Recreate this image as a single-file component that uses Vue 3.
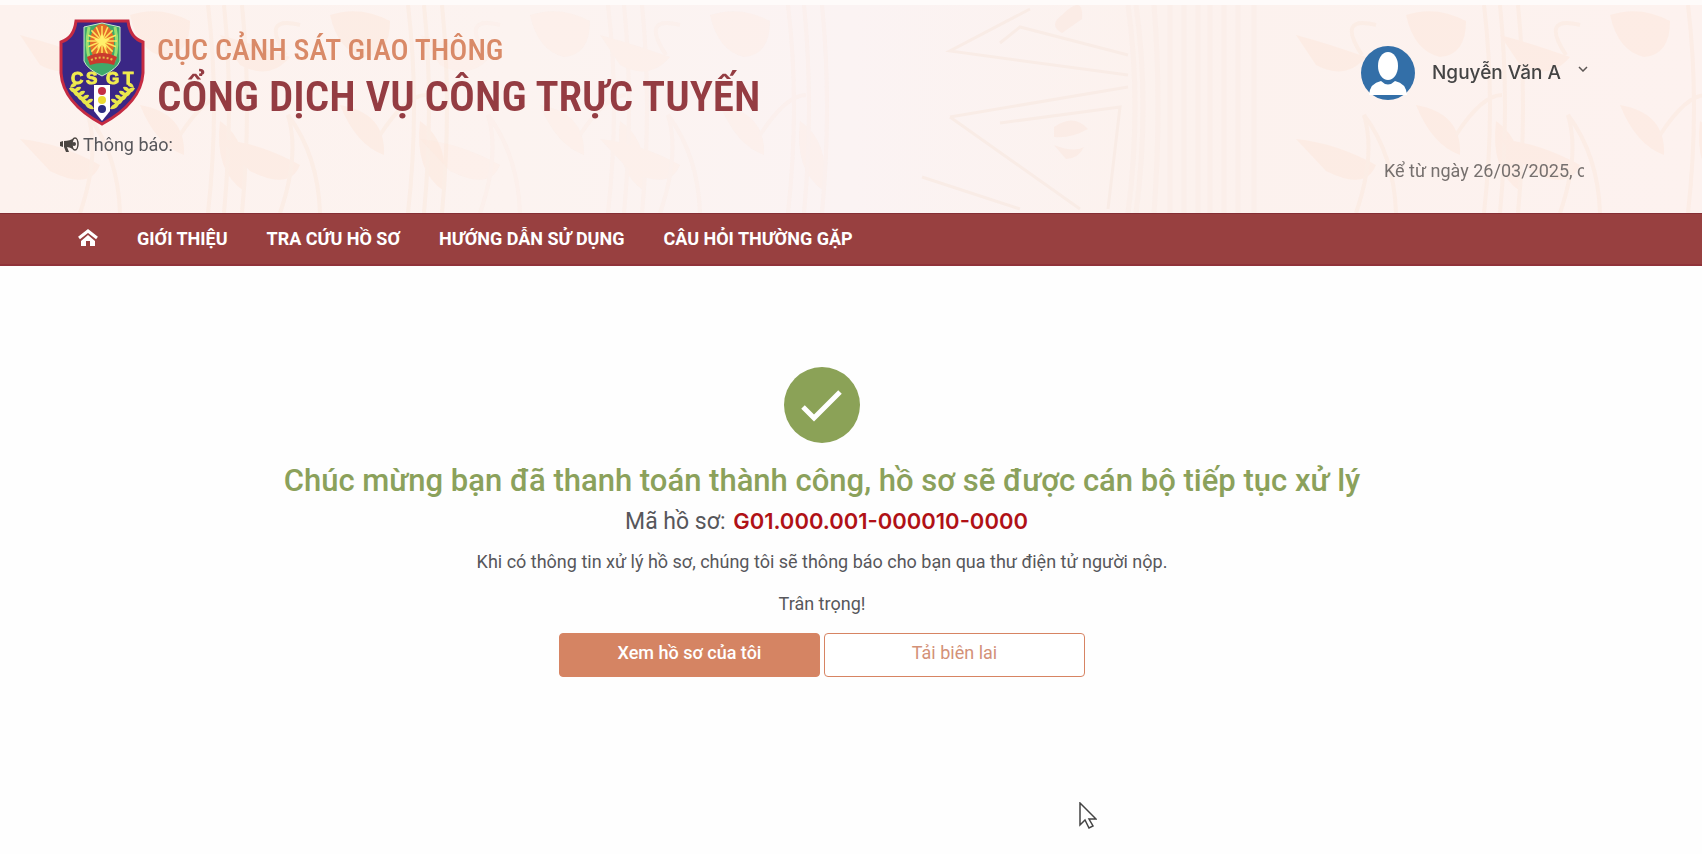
<script setup>
import { ref } from 'vue'

const menu = ['GIỚI THIỆU', 'TRA CỨU HỒ SƠ', 'HƯỚNG DẪN SỬ DỤNG', 'CÂU HỎI THƯỜNG GẶP']
const user = ref('Nguyễn Văn A')
const code = ref('G01.000.001-000010-0000')
const rays = Array.from({ length: 16 }, (_, i) => i * 22.5)
const leaves = [0, 1, 2, 3, 4]
</script>

<template>
  <div class="page">
    <header class="banner">
      <svg class="pattern" viewBox="0 0 1702 208" preserveAspectRatio="xMidYMid slice" aria-hidden="true">
        <defs>
          <linearGradient id="warm">
            <stop offset="0" stop-color="#fdf2ee" /><stop offset="0.3" stop-color="#fcf3f0" />
            <stop offset="0.5" stop-color="#fbf3f3" /><stop offset="0.68" stop-color="#fcf2ee" /><stop offset="1" stop-color="#fdf2ef" />
          </linearGradient>
          <g id="motif" fill="none" stroke="#f9ece6" stroke-width="3">
            <path d="M80 4L0 46 178 70M50 38L70 22 178 50M0 112L178 82M0 112L130 204M50 118L170 102 158 204M-28 172L70 204" />
            <path d="M112 10q22-22 20 4l-20 14q-14-8 0-18zM104 122q20-14 34 2q-18 10-34 8zM104 140q20 8 30 2q-6 12-18 12z" fill="#fbece6" stroke="none" />
            <path d="M178 0Q192 100 178 208M186 0Q200 100 186 208M204 0Q212 100 204 208M220 0V208M234 0V208M248 0V208M260 0V208M274 0V208M288 0V208M304 0V208" stroke="#faeee8" stroke-width="5" opacity="0.8" />
          </g>
          <g id="floral">
            <path d="M0 30q30 8 70 22q-20 24-50 8zM0 134q40 4 80 26q-10 26-50 6zM110 10q30-10 60 6q0 34-26 36q-26-6-34-42zM120 100q46 8 44 50q-28-10-44-50zM200 116q30 20 24 70q-30-20-24-70z" fill="#fde7db" />
            <path d="M60 208Q80 150 68 110Q98 150 100 208M160 130Q186 90 206 90M80 20Q40 10 66 50M188 0Q200 100 188 208M204 0Q214 100 204 208M222 0Q232 100 222 208" fill="none" stroke="#fbe8dd" stroke-width="4" />
          </g>
        </defs>
        <rect width="1702" height="208" fill="url(#warm)" />
        <g opacity="0.5">
          <use href="#floral" x="20" /><use href="#floral" x="220" />
          <use href="#floral" x="1296" /><use href="#floral" x="1500" />
        </g>
        <g opacity="0.25"><use href="#floral" x="420" /><use href="#floral" x="600" /></g>
        <use href="#motif" x="950" />
      </svg>

      <div class="banner-body">
        <div class="brand-side">
          <a class="brand" href="#">
            <svg class="crest" viewBox="0 0 86 108" role="img" aria-label="CSGT">
              <path d="M17 2H69Q71 19 84 23V54Q82 84 43 105Q4 84 2 54V23Q15 19 17 2Z" fill="#3a2785" stroke="#c52b42" stroke-width="3" />
              <path d="M25 8L43 4L61 8V42Q58 50 43 57Q28 50 25 42Z" fill="#3fa96a" stroke="#cdeccb" stroke-width="1" />
              <path d="M30 8Q26 26 31 42M56 8Q60 26 55 42" fill="none" stroke="#9be070" stroke-width="3" />
              <ellipse cx="43" cy="24" rx="12" ry="19" fill="#e46c29" />
              <g stroke="#ffe45c" stroke-width="1.500">
                <line v-for="r in rays" :key="r" x1="43" y1="22" x2="43" y2="7" :transform="`rotate(${r} 43 22)`" />
              </g>
              <path d="M43 14L45 20H51L46 24L48 30L43 26L38 30L40 24L35 20H41Z" fill="#fff06b" />
              <path d="M28 38Q43 30 58 38L55 46Q43 42 31 46Z" fill="#c93a2e" />
              <path d="M32 41Q43 36 54 41" fill="none" stroke="#e7bb4a" stroke-width="2" stroke-dasharray="2 2" />
              <path d="M35 66H51V92L47 97L43 102L39 97L35 92Z" fill="#fff" />
              <circle cx="43" cy="72" r="4" fill="#c42f45" /><circle cx="43" cy="81" r="4" fill="#ecdb32" /><circle cx="43" cy="90" r="4" fill="#2d2c83" />
              <g fill="#e9e64c">
                <g v-for="i in leaves" :key="i">
                  <path d="M0 0Q7-1 9 5Q2 6 0 0M1 0Q2-6 8-5Q8-1 1 0" :transform="`translate(${10 + i * 4} ${69 + i * 4})`" />
                  <path d="M0 0Q-7-1-9 5Q-2 6 0 0M-1 0Q-2-6-8-5Q-8-1-1 0" :transform="`translate(${76 - i * 4} ${69 + i * 4})`" />
                </g>
              </g>
              <g class="crest-text"><text x="12" y="65">C</text><text x="27" y="65">S</text><text x="47" y="65">G</text><text x="64" y="65">T</text></g>
            </svg>
            <span class="brand-names">
              <span class="agency">CỤC CẢNH SÁT GIAO THÔNG</span>
              <span class="portal">CỔNG DỊCH VỤ CÔNG TRỰC TUYẾN</span>
            </span>
          </a>
          <p class="notice">
            <svg class="horn" viewBox="0 0 20 16" aria-hidden="true">
              <path d="M1 5L4 4V10L1 9ZM5 4Q11 4 15 1V13Q11 10 8 10L10 15H7L5 10Z" fill="#4a4541" />
              <ellipse cx="16" cy="7" rx="3" ry="6" fill="#fdf2ee" stroke="#4a4541" stroke-width="1.500" /><circle cx="15" cy="7" r="2" fill="#4a4541" />
            </svg>
            Thông báo:
          </p>
        </div>
        <div class="user-side">
          <button class="user" type="button">
            <svg class="avatar" viewBox="0 0 54 54" aria-hidden="true">
              <circle cx="27" cy="27" r="27" fill="#336fa8" />
              <ellipse cx="27" cy="20" rx="10" ry="14" fill="#fff" />
              <path d="M8 49Q9 37 20 35Q27 42 34 35Q45 37 46 49Z" fill="#fff" />
            </svg>
            <span>{{ user }}</span>
            <svg class="caret" viewBox="0 0 10 6" aria-hidden="true"><path d="M1 1L5 5L9 1" fill="none" stroke="#5c5654" stroke-width="1.500" /></svg>
          </button>
          <div class="ticker">Kể từ ngày 26/03/2025, c</div>
        </div>
      </div>
    </header>

    <nav class="menu">
      <a class="home" href="#" aria-label="Trang chủ">
        <svg viewBox="0 0 20 18" aria-hidden="true"><path d="M1 9L10 2L19 9" fill="none" stroke="#fff" stroke-width="3" /><path d="M10 6L17 12V17H12V12H8V17H3V12Z" fill="#fff" /></svg>
      </a>
      <a v-for="m in menu" :key="m" href="#">{{ m }}</a>
    </nav>

    <main class="result">
      <svg class="tick" viewBox="0 0 78 78" aria-hidden="true"><circle cx="39" cy="39" r="38" fill="#8ba257" /><path d="M20 41L31 52L57 26" fill="none" stroke="#fff" stroke-width="5" /></svg>
      <h1>Chúc mừng bạn đã thanh toán thành công, hồ sơ sẽ được cán bộ tiếp tục xử lý</h1>
      <p class="record">Mã hồ sơ: <strong>{{ code }}</strong></p>
      <p class="note first">Khi có thông tin xử lý hồ sơ, chúng tôi sẽ thông báo cho bạn qua thư điện tử người nộp.</p>
      <p class="note">Trân trọng!</p>
      <div class="actions">
        <button class="btn primary" type="button">Xem hồ sơ của tôi</button>
        <button class="btn outline" type="button">Tải biên lai</button>
      </div>
    </main>
    <svg class="pointer" viewBox="0 0 18 27" aria-hidden="true"><path d="M1 1V23L6 18L10 26L14 24L10 17H17Z" fill="#fff" stroke="#444" stroke-width="1.500" /></svg>
  </div>
</template>

<style>
body { margin: 0; background: #fefefe; }
</style>

<style scoped>
.page { position: relative; min-height: 100vh; font-family: Roboto, "Noto Sans", sans-serif; color: #57575b; }
p, h1 { margin: 0; }
a { color: inherit; text-decoration: none; }
button { font-family: inherit; cursor: pointer; }
.banner { position: relative; border-top: 5px solid #fefbfa; background: #fcf3f0; }
.pattern { position: absolute; inset: 0; width: 100%; height: 100%; }
.banner-body { position: relative; display: flex; justify-content: space-between; min-height: 208px; padding: 14px 118px 0 59px; box-sizing: border-box; }
.brand { display: flex; gap: 12px; }
.crest { width: 86px; height: 108px; }
.crest-text { font: bold 17px "Liberation Sans", sans-serif; fill: #f1ec50; stroke: #f1ec50; stroke-width: 1px; }
.brand-names { display: flex; flex-direction: column; font-family: "Roboto Condensed", Roboto, sans-serif; white-space: nowrap; padding-top: 12px; }
.agency { font-size: 30px; line-height: 38px; font-weight: 500; color: #d98a68; }
.portal { font-size: 43px; line-height: 54px; font-weight: 600; color: #943c42; }
.notice { display: flex; align-items: center; gap: 4px; font-size: 18px; line-height: 24px; margin-top: 6px; }
.horn { width: 20px; height: 16px; }
.user-side { display: flex; flex-direction: column; width: 223px; }
.user { display: flex; align-items: center; gap: 17px; margin-top: 27px; padding: 0 2px 0 0; border: 0; background: none; font: 500 19px/28px Inter, sans-serif; color: #444; white-space: nowrap; }
.avatar { width: 54px; height: 54px; flex: none; }
.caret { width: 10px; height: 6px; flex: none; margin: 0 0 8px auto; }
.ticker { margin: 58px 0 0 23px; overflow: hidden; white-space: nowrap; font-size: 18px; line-height: 26px; color: #76706e; }
.menu { display: flex; align-items: center; gap: 39px; height: 53px; box-sizing: border-box; padding: 0 78px 2px; background: #984040; border-top: 1px solid #852f35; border-bottom: 2px solid #90333a; color: #fff; font-size: 18px; font-weight: 700; white-space: nowrap; }
.home svg { display: block; width: 20px; height: 18px; }
.result { display: flex; flex-direction: column; align-items: center; padding: 100px 118px 40px 60px; text-align: center; }
.tick { width: 78px; height: 78px; }
h1 { margin-top: 15px; font-size: 31px; line-height: 44px; font-weight: 500; color: #8ba15b; }
.record { padding-left: 9px; font-size: 23px; line-height: 38px; }
.record strong { margin-left: 2px; font: 600 22px Inter, sans-serif; color: #b01116; }
.note { margin-top: 12px; font-size: 18px; line-height: 30px; }
.note.first { margin-top: 6px; }
.actions { display: flex; gap: 4px; margin-top: 14px; }
.btn { width: 261px; height: 44px; padding: 0 0 6px; border: 1px solid #d78463; border-radius: 4px; font-size: 18px; }
.primary { background: #d58463; color: #fff; font-weight: 500; }
.outline { background: #fff; color: #d39177; }
.pointer { position: absolute; left: 1079px; top: 802px; width: 18px; height: 27px; }
</style>
